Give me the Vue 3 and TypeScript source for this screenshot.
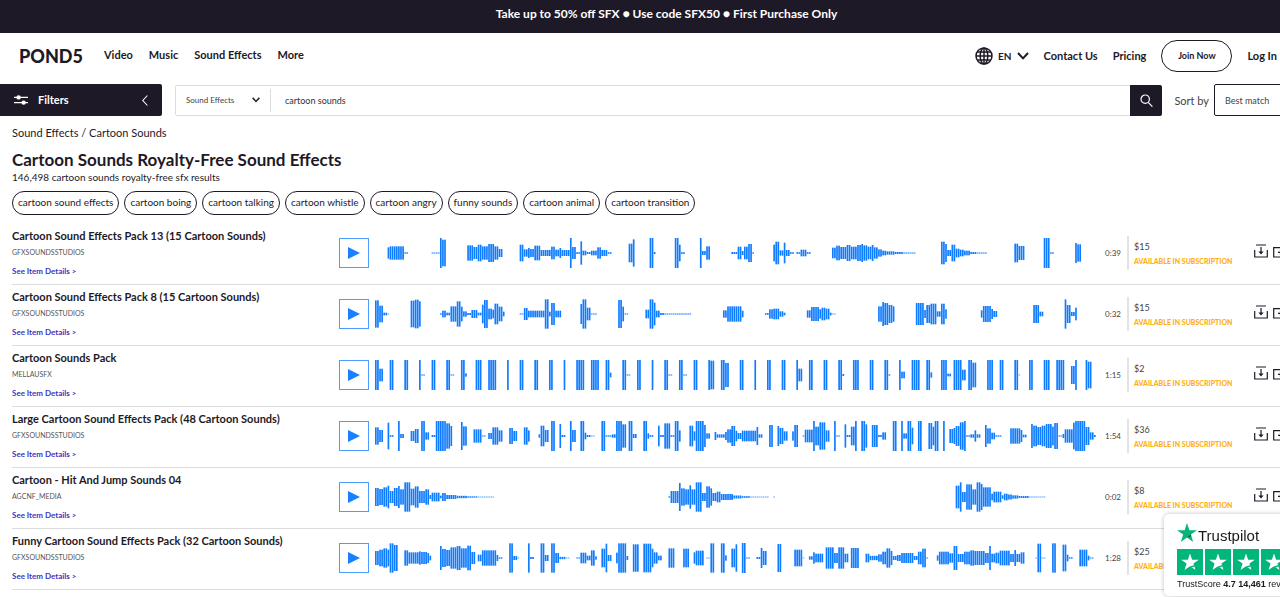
<script setup lang="ts">
import { ref } from 'vue'

interface Track {
  title: string
  artist: string
  time: string
  price: string
  wave: [string, string]
}

interface Bar {
  x: number
  h: number
}

// Waveform space: three units per CSS pixel, 90 units tall.
const FULL = 90
const START = 135
const LENGTH = 2160
const PITCH = 6.28
const HALF = 1200

const nav: string[] = ['Video', 'Music', 'Sound Effects', 'More']
const related: string[] = [
  'cartoon sound effects',
  'cartoon boing',
  'cartoon talking',
  'cartoon whistle',
  'cartoon angry',
  'funny sounds',
  'cartoon animal',
  'cartoon transition',
]

// Each run is "from-to:height"; a run without a height is full scale.
const tracks: Track[] = [
  {
    title: 'Cartoon Sound Effects Pack 13 (15 Cartoon Sounds)',
    artist: 'GFXSOUNDSSTUDIOS',
    time: '0:39',
    price: '$15',
    wave: [
      '171-177:34 177-222:40 222-234:4 303-327:3 327-333 333-348:80 410-428:46 428-441:36 441-458:50 458-472:40 472-490:54 490-504:40 504-516:24 567-579:50 579-591:22 591-600:30 600-612:24 612-630:44 630-660:18 660-674:38 674-686:20 686-692:30 692-717:18 717-723 723-736:36 736-748:5 748-756:70 756-768:14 768-780:6 780-798:14 798-816:34 816-830:18 830-843:5 894-906:56 906-912:82 957-969 969-975:6 1032-1044 1044-1051:50 1051-1064:5 1107-1115 1115-1128:12 1128-1140:40',
      '3-21:6 21-33:38 33-40:12 40-53:38 53-66:54 66-72:4 129-135:50 135-148:68 148-160:16 160-167:62 167-180:18 180-192:5 198-210:5 210-228:20 228-242:5 304-317:32 317-330:44 330-348:36 348-360:48 360-380:38 380-392:48 392-400:54 400-412:46 412-424:38 424-430:48 430-442:34 442-455:22 455-467:14 467-490:10 490-520:6 520-556:3 631-644:68 644-651:54 651-663:18 663-675:50 675-688:26 688-700:20 700-720:14 720-740:6 740-770:3 852-864:56 864-884:42 940-959 959-971:4 1035-1041:60 1041-1053:52',
    ],
  },
  {
    title: 'Cartoon Sound Effects Pack 8 (15 Cartoon Sounds)',
    artist: 'GFXSOUNDSSTUDIOS',
    time: '0:32',
    price: '$15',
    wave: [
      '135-147:82 147-159:50 159-171:8 171-177:2 240-252:80 252-264:86 264-272:76 328-334:4 334-347:20 347-360:8 360-378:46 378-390:76 390-397:44 397-410:16 410-422:6 422-442:24 442-454:8 454-460:56 460-472:84 472-486:32 486-492:26 492-504:62 504-517:44 517-523:14 567-579:3 579-592:36 592-642:20 642-654:88 654-661:14 661-674:66 674-692:20 750-756:60 756-768:88 768-780:38 780-800:3 864-876:84 876-882:44 882-894:3 945-957:26 957-969:88 969-976:68 976-988:20 988-1000:6 1000-1083:3 1177-1190:22 1190-1200:46',
      '0-34:46 34-40:20 102-116:5 116-128:28 128-148:32 148-160:16 160-166:8 229-242:22 242-268:42 268-274:28 274-286:38 286-298:32 298-304:8 304-317:2 444-456:46 456-462:72 462-474:66 474-486:54 486-494:46 556-582:66 582-588:24 588-600:54 600-619:62 619-632:16 632-645:62 645-651:28 752-757:22 757-783:48 783-789:30 789-801:18 909-928:54 928-940:14 1003-1009:88 1009-1022:54 1022-1034:12 1034-1041:38',
    ],
  },
  {
    title: 'Cartoon Sounds Pack',
    artist: 'MELLAUSFX',
    time: '1:15',
    price: '$2',
    wave: [
      '135-147 147-159:38 177-189 221-234 264-271 271-284:3 303-315 347-360 360-372:3 390-404 404-410:10 435-453 473-498 529-536 567-579 612-624 655-668 699-705 737-762 781-806 825-838 838-844:14 876-888 888-900:3 920-933 963-969 1001-1014 1014-1026:3 1045-1058 1058-1071:3 1089-1101 1133-1139 1139-1152:86 1171-1184 1184-1196:72',
      '26-39 69-76 108-120 152-165 195-201 201-214:38 234-246 278-290 321-334 334-340:6 366-384 416-429 460-472 472-478:4 504-510 510-522:20 541-567 586-598 598-604:16 630-648 648-660:8 667-692 692-705:32 711-724 724-737:74 768-786 806-818 849-862 862-867:2 894-906 939-957 976-1001 1020-1033:54 1033-1038 1064-1070 1070-1083:80',
    ],
  },
  {
    title: 'Large Cartoon Sound Effects Pack (48 Cartoon Sounds)',
    artist: 'GFXSOUNDSSTUDIOS',
    time: '1:54',
    price: '$36',
    wave: [
      '135-146:52 146-159:36 171-177:80 177-189:5 202-209 209-221:12 240-252:30 252-265:42 271-285 285-297:22 303-315:6 315-348 348-360:76 360-366:60 390-396:84 396-410:58 429-454:40 454-466:3 473-485:18 485-503:52 503-516:34 536-548:48 548-561:30 580-592:52 592-598:34 624-630:10 630-642:62 642-655:36 661-674 686-692:72 692-705:6 717-724 724-737:36 750-762 762-768:20 768-780:6 780-793:2 812-825 825-844:4 844-856:10 856-875 875-888:70 894-906 906-920:12 938-951 951-957:16 957-969:5 982-988:62 988-1001:6 1001-1020:76 1020-1032:5 1032-1045 1045-1051:34 1077-1089:62 1089-1095:28 1095-1121 1121-1127:66 1127-1139:16 1152-1158:24 1158-1184:10 1184-1190:24 1190-1200:40',
      '0-3:36 3-15:60 15-21:32 21-34:18 34-78:32 78-84:54 84-96:10 116-129:66 141-147:60 147-160:48 160-172:28 186-192:28 192-204:66 217-222:3 222-248:38 248-254 254-267:56 267-285:82 285-298:34 311-317 317-329:3 342-348:70 348-360:6 360-373:56 373-380 393-405 405-411:70 424-443:66 443-456:6 456-468:22 486-499 512-518 518-531:16 531-543 543-549:50 562-575 594-606:78 606-612:56 612-626 638-645 657-669:42 669-675:48 675-688:60 688-700:82 700-707 707-720:4 720-732:10 732-738:34 738-750:10 764-770:66 770-783:46 783-795:20 795-812:4 840-870:46 870-876:36 876-890:8 903-909:72 909-922:62 922-934:54 934-946:62 946-966:72 966-972:56 972-985:78 985-997:3 997-1003:12 1003-1028:40 1028-1034:80 1034-1066 1066-1078:54 1078-1091:22 1091-1098:6',
    ],
  },
  {
    title: 'Cartoon - Hit And Jump Sounds 04',
    artist: 'AGCNF_MEDIA',
    time: '0:02',
    price: '$8',
    wave: [
      '135-147:54 147-158:48 158-170:58 170-177:68 177-190:36 190-202:54 202-208:66 208-221:46 221-240:88 240-252:50 252-265:64 265-284:36 284-297:46 297-303:12 303-327:26 327-333:8 333-347:24 347-378:12 378-410:7 410-440:4 440-492:2 1014-1020:4 1020-1045:36 1045-1051:84 1051-1064:52 1064-1076:46 1076-1083:70 1083-1095:46 1095-1114:88 1114-1127:24 1127-1139:64 1139-1146:52 1146-1158:24 1158-1171:32 1171-1200:18',
      '0-4:18 4-34:9 34-60:5 60-116:2 128-134:2 675-688:68 688-695:88 695-708:30 708-726:76 726-738:46 738-752:88 752-758:78 758-783:58 783-789:20 789-814:32 814-820:10 820-832:20 832-846:15 846-864:10 864-896:6 896-946:2',
    ],
  },
  {
    title: 'Funny Cartoon Sound Effects Pack (32 Cartoon Sounds)',
    artist: 'GFXSOUNDSSTUDIOS',
    time: '1:28',
    price: '$25',
    wave: [
      '135-147:42 147-158:50 158-171:58 171-177:50 177-189:88 189-201:78 221-233:46 233-265:34 265-271:40 271-290:36 290-297:30 297-303:14 328-334:72 334-348:54 348-360:48 360-378:64 378-390:72 390-410:58 410-422:74 422-435:36 441-454:20 454-498:46 498-504:18 504-516:4 536-548:88 548-561:12 561-567:2 592-598:88 598-612:6 630-642:88 642-654:18 661-674:88 674-687:30 687-705:7 705-718:2 737-750:3 750-768:32 768-780:14 780-793:46 793-800:10 812-825:56 825-831:86 831-844:18 857-863:32 863-888:88 888-894:12 906-925:82 938-964:86 964-970:56 970-982:34 982-995:14 1014-1032:58 1058-1077:56 1089-1095:34 1095-1121:44 1128-1140:2 1140-1152:88 1171-1184:88 1184-1190:16',
      '3-15:56 15-21:82 34-47 47-60:3 78-91:6 91-97:60 97-109:42 141-153:84 192-216:50 216-222:2 235-248:10 248-254:34 254-279:26 285-311:64 311-324:30 324-342:64 342-354:26 360-386:60 405-417:26 417-442:13 442-456:22 456-468:38 468-480:58 480-486:42 486-498:12 498-512:18 512-550:30 550-562:12 562-575:38 575-588:56 588-594:3 620-626:16 626-657:38 657-669:28 669-682:72 682-700:24 700-720:38 720-732:46 732-764:42 764-776:30 776-783:72 783-795:26 795-808:32 808-838:44 838-852:24 852-858:48 858-870:24 870-884:34 915-921:2 921-933:86 933-946:2 965-978:88 996-1010:80 1010-1016:20 1016-1028:4 1047-1072:50 1072-1078:14 1078-1091:3',
    ],
  },
]

function barsOf(wave: [string, string]): Bar[] {
  const out: Bar[] = []
  wave.forEach((half, side) => {
    for (const run of half.split(' ')) {
      const [range, height] = run.split(':')
      const [from, to] = range.split('-').map((n) => Number(n) + side * HALF - START)
      const first = Math.round(from / PITCH)
      const last = Math.max(first + 1, Math.round(to / PITCH))
      for (let k = first; k < last; k++) {
        out.push({ x: k * PITCH, h: height ? Number(height) : FULL })
      }
    }
  })
  return out
}

const rows = tracks.map((t) => ({ ...t, bars: barsOf(t.wave) }))
const query = ref('cartoon sounds')
const category = ref('Sound Effects')
const sort = ref('Best match')
</script>

<template>
  <div class="viewport">
    <div class="page">
      <div class="promo">Take up to 50% off SFX ● Use code SFX50 ● First Purchase Only</div>

      <header class="header">
        <a class="logo" href="#">POND5</a>
        <nav class="nav">
          <a v-for="item in nav" :key="item" href="#">{{ item }}</a>
        </nav>
        <div class="account">
          <button class="lang" type="button">
            <svg width="18" height="18" viewBox="0 0 18 18" fill="none" stroke="#1e1926" stroke-width="1.5">
              <circle cx="9" cy="9" r="8" />
              <ellipse cx="9" cy="9" rx="3.8" ry="8" />
              <path d="M9 1v16M1 9h16M2.2 5h13.6M2.2 13h13.6" />
            </svg>
            <span>EN</span>
            <svg width="12" height="8" viewBox="0 0 12 8" fill="none" stroke="#1e1926" stroke-width="2">
              <path d="M1 1l5 5.4L11 1" />
            </svg>
          </button>
          <a href="#">Contact Us</a>
          <a href="#">Pricing</a>
          <a class="join" href="#">Join Now</a>
          <a href="#">Log In</a>
        </div>
      </header>

      <div class="toolbar">
        <button class="filters" type="button">
          <svg width="14" height="12" viewBox="0 0 14 12" fill="#fff" stroke="#fff" stroke-width="1.4">
            <path d="M0 3.4h14M0 8.6h14" />
            <circle cx="4.6" cy="3.4" r="1.5" />
            <circle cx="9.6" cy="8.6" r="1.5" />
          </svg>
          <span>Filters</span>
          <svg class="back" width="6" height="11" viewBox="0 0 6 11" fill="none" stroke="#fff" stroke-width="1.1">
            <path d="M5.4.5L.8 5.5l4.6 5" />
          </svg>
        </button>
        <form class="search" @submit.prevent>
          <span class="category">
            <select v-model="category" aria-label="Category">
              <option>Sound Effects</option>
              <option>Music</option>
              <option>Video</option>
            </select>
            <svg width="8" height="6" viewBox="0 0 8 6" fill="none" stroke="#1e1926" stroke-width="1.5">
              <path d="M.6.8L4 4.4 7.4.8" />
            </svg>
          </span>
          <input v-model="query" type="text" aria-label="Search" />
          <button type="submit" aria-label="Search">
            <svg width="13" height="13" viewBox="0 0 13 13" fill="none" stroke="#fff" stroke-width="1.2">
              <circle cx="5.2" cy="5.2" r="4.2" />
              <path d="M8.2 8.4l4.2 4.2" />
            </svg>
          </button>
        </form>
        <label class="sort-label" for="sort">Sort by</label>
        <select id="sort" v-model="sort" class="sort">
          <option>Best match</option>
          <option>Newest</option>
        </select>
      </div>

      <main class="content">
        <nav class="crumbs"><a href="#">Sound Effects</a> / <a href="#">Cartoon Sounds</a></nav>
        <h1>Cartoon Sounds Royalty-Free Sound Effects</h1>
        <p class="count">146,498 cartoon sounds royalty-free sfx results</p>
        <div class="tags">
          <a v-for="tag in related" :key="tag" href="#">{{ tag }}</a>
        </div>

        <article v-for="row in rows" :key="row.title" class="track">
          <div class="info">
            <h2>{{ row.title }}</h2>
            <a class="artist" href="#">{{ row.artist }}</a>
            <a class="details" href="#">See Item Details &gt;</a>
          </div>
          <button class="play" type="button" :aria-label="'Play ' + row.title">
            <svg width="12" height="12" viewBox="0 0 12 12" fill="#1a80ff"><path d="M0 0l12 6-12 6z" /></svg>
          </button>
          <svg class="wave" :viewBox="`0 0 ${LENGTH} ${FULL}`" preserveAspectRatio="none" fill="#0f7bff">
            <rect v-for="(bar, i) in row.bars" :key="i" :x="bar.x" :y="(FULL - bar.h) / 2" width="5" :height="bar.h" />
          </svg>
          <span class="time">{{ row.time }}</span>
          <div class="price">
            <span>{{ row.price }}</span>
            <strong>AVAILABLE IN SUBSCRIPTION</strong>
          </div>
          <div class="actions">
            <button type="button" aria-label="Download preview">
              <svg width="14" height="14" viewBox="0 0 14 14" fill="none" stroke="#1e1926" stroke-width="1.2">
                <path d="M2 1h10M.7 6v7h12.6V6M7 3v6" />
                <path d="M4.4 7.6h5.2L7 10.4z" fill="#1e1926" stroke="none" />
              </svg>
            </button>
            <button type="button" aria-label="Add to collection">
              <svg width="14" height="14" viewBox="0 0 14 14" fill="none" stroke="#1e1926" stroke-width="1.2">
                <path d="M9 3.7H.7V13h11V6M5 8.300h5M7.500 5.800v5" />
              </svg>
            </button>
          </div>
        </article>
      </main>
    </div>

    <aside class="trust">
      <div class="brand">
        <svg width="20" height="19" viewBox="0 0 20 19">
          <path fill="#00b67a" d="M10 0l2.400 7.200H20l-6.200 4.400L16.200 19 10 14.500 3.800 19l2.400-7.400L0 7.200h7.600z" />
          <path fill="#005128" d="M14.300 13.200l-.5-1.600L10 14.500z" />
        </svg>
        <span>Trustpilot</span>
      </div>
      <div class="stars">
        <svg v-for="n in 5" :key="n" width="26" height="26" viewBox="0 0 26 26">
          <path fill="#00b67a" d="M0 0h26v26H0z" />
          <path
            fill="#fff"
            d="M13 4.500l2.100 6.200h6.700l-5.400 3.900 2.100 6.300L13 17.300l-5.500 3.600 2.100-6.300-5.400-3.900h6.700z"
          />
          <path fill="#00b67a" d="M13 17.300l4-1 .3 1.200-2.300 1z" />
        </svg>
      </div>
      <div class="score">TrustScore <b>4.7</b> <b>14,461</b> reviews</div>
    </aside>
  </div>
</template>

<style>
body {
  background: #fff;
}
</style>

<style scoped>
* {
  box-sizing: border-box;
}
.viewport {
  overflow: hidden;
  font-family: Lato, 'Liberation Sans', sans-serif;
  color: #1e1926;
}
/* The page runs a little wider than the window. */
.page {
  margin-right: -53px;
}
a {
  color: inherit;
  text-decoration: none;
}
button {
  padding: 0;
  border: 0;
  background: none;
  color: inherit;
  font-family: inherit;
}
svg {
  display: block;
  flex: none;
}
.promo {
  height: 33px;
  background: #1e1926;
  color: #fff;
  font-size: 12px;
  font-weight: 700;
  line-height: 28px;
  text-align: center;
}
.header {
  display: flex;
  align-items: center;
  height: 45px;
  padding: 0 53px 0 19px;
  font-size: 11px;
  font-weight: 700;
}
.logo {
  font-size: 18px;
  font-weight: 900;
}
.nav {
  display: flex;
  gap: 16px;
  margin-left: 21px;
  padding-bottom: 2px;
}
.account {
  display: flex;
  align-items: center;
  gap: 15px;
  margin-left: auto;
  padding-right: 3px;
}
.lang {
  display: flex;
  align-items: center;
  gap: 5px;
  font-size: 10px;
  font-weight: 700;
}
.join {
  width: 71px;
  border: 1px solid #1e1926;
  border-radius: 16px;
  font-size: 9px;
  line-height: 30px;
  text-align: center;
}
.toolbar {
  display: flex;
  align-items: center;
  height: 32px;
  margin-top: 6px;
}
.filters {
  display: flex;
  align-items: center;
  gap: 10px;
  width: 162px;
  height: 32px;
  padding: 0 14px;
  border-radius: 0 2px 2px 0;
  background: #1e1926;
  color: #fff;
  font-size: 11px;
  font-weight: 700;
}
.filters span {
  padding-bottom: 2px;
}
.back {
  margin-left: auto;
}
.search {
  display: flex;
  flex: 1;
  height: 31px;
  margin-left: 13px;
  border: 1px solid #dcdcdc;
  border-radius: 2px;
}
.category {
  display: flex;
  align-items: center;
  margin: 3px 0;
  padding: 0 10px;
  border-right: 1px solid #dcdcdc;
}
.category select {
  width: 66px;
  appearance: none;
  padding: 0;
  border: 0;
  background: none;
  color: #444;
  font-family: inherit;
  font-size: 8px;
}
.search input {
  flex: 1;
  min-width: 0;
  padding: 0 14px;
  border: 0;
  outline: 0;
  color: #333;
  font-family: inherit;
  font-size: 9px;
}
.search button {
  display: grid;
  place-items: center;
  width: 32px;
  margin: -1px;
  border-radius: 0 2px 2px 0;
  background: #1e1926;
}
.sort-label {
  margin: 0 5px 0 12px;
  color: #444;
  font-size: 11px;
}
.sort {
  appearance: none;
  width: 107px;
  height: 32px;
  margin-right: 12px;
  padding: 0 10px;
  border: 1px solid #1e1926;
  border-radius: 2px;
  background: #fff;
  color: #444;
  font-family: inherit;
  font-size: 9px;
}
.content {
  padding-left: 12px;
}
.crumbs {
  margin-top: 9px;
  font-size: 11px;
  line-height: 16px;
}
h1 {
  margin: 9px 0 0;
  font-size: 17px;
  font-weight: 700;
  line-height: 20px;
}
.count {
  margin: 0;
  font-size: 10px;
  line-height: 14px;
}
.tags {
  display: flex;
  gap: 5px;
  margin: 7px 0 9px;
  font-size: 10px;
}
.tags a {
  padding: 0 5px 2px;
  border: 1px solid #1e1926;
  border-radius: 12px;
  line-height: 20px;
}
.track {
  display: flex;
  align-items: center;
  height: 61px;
  padding-bottom: 2px;
  border-bottom: 1px solid #dcdcdc;
}
.info {
  display: flex;
  flex-direction: column;
  width: 327px;
}
h2 {
  margin: 0;
  font-size: 11px;
  font-weight: 700;
  line-height: 16px;
}
.artist {
  color: #555;
  font-size: 7px;
  line-height: 16px;
}
.details {
  margin-top: 3px;
  color: #4034c4;
  font-size: 8px;
  font-weight: 700;
  line-height: 16px;
}
.play {
  display: grid;
  place-items: center;
  width: 30px;
  height: 30px;
  border: 1px solid #4c9dff;
}
.wave {
  flex: 1;
  min-width: 0;
  height: 30px;
  margin-left: 6px;
}
.time {
  width: 25px;
  color: #444;
  font-size: 8px;
  text-align: right;
}
.price {
  display: flex;
  flex-direction: column;
  width: 127px;
  margin-left: 6px;
  padding: 4px 0 2px 5px;
  border-left: 2px solid #e3e3e3;
  color: #444;
  font-size: 9px;
  line-height: 14px;
}
.price strong {
  color: #ffb010;
  font-size: 7px;
  font-weight: 900;
}
.actions {
  display: flex;
  gap: 5px;
  width: 79px;
  padding-bottom: 4px;
}
.trust {
  position: fixed;
  right: -53px;
  bottom: 1px;
  width: 169px;
  padding: 9px 13px 2px;
  border-radius: 5px;
  background: #fff;
  box-shadow: 0 0 4px rgba(0, 0, 0, 0.25);
  color: #191919;
  font-family: 'Liberation Sans', Arial, sans-serif;
}
.brand {
  display: flex;
  gap: 1px;
  font-size: 15px;
  line-height: 26px;
}
.stars {
  display: flex;
  gap: 2px;
}
.score {
  font-size: 9px;
  line-height: 19px;
  white-space: nowrap;
}
</style>
